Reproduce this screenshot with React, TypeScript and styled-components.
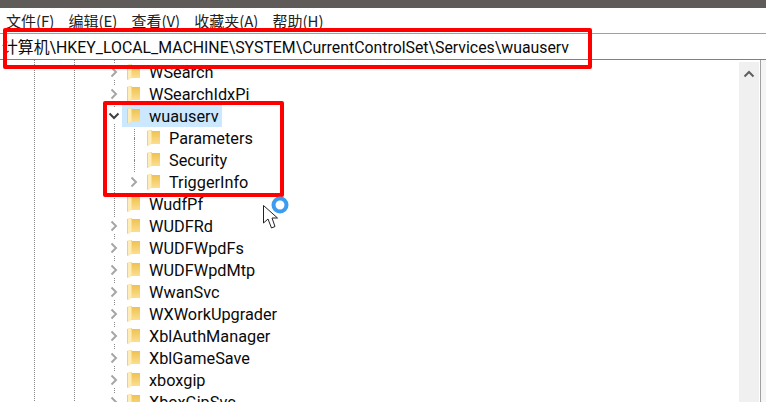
import styled, { createGlobalStyle } from "styled-components";

const GlobalStyle = createGlobalStyle`
  html, body {
    margin: 0;
    padding: 0;
    background: #fff;
    overflow: hidden;
  }
`;

interface TreeItem {
  name: string;
  level?: number;
  toggle?: "closed" | "open" | "none";
  selected?: boolean;
}

const menus = ["文件(F)", "编辑(E)", "查看(V)", "收藏夹(A)", "帮助(H)"];

const items: TreeItem[] = [
  { name: "WSearch", toggle: "closed" },
  { name: "WSearchIdxPi", toggle: "closed" },
  { name: "wuauserv", toggle: "open", selected: true },
  { name: "Parameters", level: 1, toggle: "none" },
  { name: "Security", level: 1, toggle: "none" },
  { name: "TriggerInfo", level: 1, toggle: "closed" },
  { name: "WudfPf", toggle: "none" },
  { name: "WUDFRd", toggle: "closed" },
  { name: "WUDFWpdFs", toggle: "closed" },
  { name: "WUDFWpdMtp", toggle: "closed" },
  { name: "WwanSvc", toggle: "closed" },
  { name: "WXWorkUpgrader", toggle: "closed" },
  { name: "XblAuthManager", toggle: "closed" },
  { name: "XblGameSave", toggle: "closed" },
  { name: "xboxgip", toggle: "closed" },
  { name: "XboxGipSvc", toggle: "closed" },
];

function Folder() {
  return (
    <FolderSvg viewBox="0 0 13 16" width="13" height="16">
      <defs>
        <linearGradient id="pane" x1="0" y1="0" x2="0" y2="1">
          <stop offset="0" stopColor="#efbf4c" />
          <stop offset="1" stopColor="#fde39a" />
        </linearGradient>
      </defs>
      <path d="M0 1 L5 0 L5 1 L13 1 L13 14 L4 14 L1 16 L0 16 Z" fill="url(#pane)" />
      <path d="M0 1 L4.5 0 L4.5 13 L0.5 16 L0 16 Z" fill="#feedb8" />
      <path d="M0.5 1 L0.5 15.5" stroke="#ecd080" strokeWidth="1" />
    </FolderSvg>
  );
}

function Toggle({ state }: { state: TreeItem["toggle"] }) {
  if (state === "none") return <ToggleCell $blank />;
  return (
    <ToggleCell>
      <svg width="12" height="12" viewBox="0 0 12 12" fill="none">
        {state === "open" ? (
          <path d="M1.5 3.5 L6 8 L10.5 3.5" stroke="#404040" strokeWidth="2" />
        ) : (
          <path d="M3.5 1.5 L8 6 L3.5 10.5" stroke="#a6a6a6" strokeWidth="2" />
        )}
      </svg>
    </ToggleCell>
  );
}

export default function App() {
  return (
    <Window>
      <GlobalStyle />
      <TitleStrip />
      <MenuBar>
        {menus.map((m) => (
          <MenuItem key={m}>{m}</MenuItem>
        ))}
      </MenuBar>
      <AddressBar>
        <AddressText>计算机\HKEY_LOCAL_MACHINE\SYSTEM\CurrentControlSet\Services\wuauserv</AddressText>
      </AddressBar>
      <Body>
        <Tree>
          {items.map((item) => (
            <Row key={item.name} $level={item.level ?? 0}>
              <Toggle state={item.toggle} />
              <Entry $selected={item.selected}>
                <Folder />
                <Label>{item.name}</Label>
              </Entry>
            </Row>
          ))}
          <ChildGuide />
        </Tree>
        <Scrollbar>
          <svg width="12" height="8" viewBox="0 0 12 8" fill="none">
            <path d="M1.5 6.5 L6 2 L10.5 6.5" stroke="#606060" strokeWidth="2" />
          </svg>
        </Scrollbar>
        <RightEdge />
      </Body>
      <AddressMark />
      <TreeMark />
      <BusyCursor>
        <svg width="32" height="36" viewBox="0 0 32 36">
          <circle cx="18" cy="9" r="6.5" fill="#fff" stroke="#3b9cf0" strokeWidth="4" />
          <path
            d="M1.5 9.5 L1.5 27 L6 23 L9.5 32 L13 30.5 L10 22 L15.5 22 Z"
            fill="#fff"
            stroke="#222"
            strokeWidth="1"
          />
        </svg>
      </BusyCursor>
    </Window>
  );
}

const Window = styled.div`
  position: relative;
  width: 766px;
  height: 402px;
  overflow: hidden;
  background: #fff;
  color: #0a0a0a;
  font-family: "Roboto", "Noto Sans CJK SC", sans-serif;
  font-size: 16.3px;
`;

const TitleStrip = styled.div`
  height: 8px;
  background: #5f5b58;
`;

const MenuBar = styled.div`
  display: flex;
  height: 25px;
  padding-left: 6px;
  gap: 14px;
  align-items: center;
  font-family: "Noto Sans CJK SC", sans-serif;
  font-size: 15px;
  color: #222;
`;

const MenuItem = styled.span`
  white-space: nowrap;
`;

const AddressBar = styled.div`
  display: flex;
  align-items: center;
  height: 25px;
  border-top: 1px solid #a0a0a0;
  border-bottom: 1px solid #808080;
  overflow: hidden;
`;

const AddressText = styled.span`
  margin-left: 2px;
  white-space: nowrap;
  font-size: 15.85px;
`;

const Body = styled.div`
  display: flex;
  height: 342px;
`;

const Tree = styled.div`
  position: relative;
  flex: 1;
  padding-top: 1px;
  background-image:
    repeating-linear-gradient(to bottom, #888 0 1px, transparent 1px 2px),
    repeating-linear-gradient(to bottom, #888 0 1px, transparent 1px 2px),
    repeating-linear-gradient(to bottom, #888 0 1px, transparent 1px 2px);
  background-size: 1px 100%;
  background-position: 34px 0, 74px 0, 114px 0;
  background-repeat: no-repeat;
`;

const Row = styled.div<{ $level: number }>`
  display: flex;
  align-items: center;
  height: 22px;
  padding-left: ${(p) => 106 + p.$level * 20}px;
`;

const ToggleCell = styled.span<{ $blank?: boolean }>`
  display: flex;
  align-items: center;
  justify-content: center;
  flex: none;
  width: 16px;
  height: ${(p) => (p.$blank ? "1px" : "16px")};
  background: ${(p) =>
    p.$blank
      ? "repeating-linear-gradient(to right, transparent 0 8px, #888 8px 9px, transparent 9px 10px)"
      : "#fff"};
`;

const Entry = styled.span<{ $selected?: boolean }>`
  display: flex;
  align-items: center;
  height: 22px;
  padding: 0 3px 0 5px;
  background: ${(p) => (p.$selected ? "#cce8ff" : "transparent")};
`;

const FolderSvg = styled.svg`
  flex: none;
  margin-right: 9px;
`;

const Label = styled.span`
  padding-top: 2px;
  line-height: 20px;
  white-space: nowrap;
`;

const ChildGuide = styled.div`
  position: absolute;
  left: 134px;
  top: 69px;
  width: 1px;
  height: 43px;
  background: repeating-linear-gradient(to bottom, #888 0 1px, transparent 1px 2px);
`;

const Scrollbar = styled.div`
  display: flex;
  justify-content: center;
  flex: none;
  width: 20px;
  padding-top: 8px;
  margin-top: 2px;
  background: #f0f0f0;
`;

const RightEdge = styled.div`
  flex: none;
  width: 5px;
  margin-left: 1px;
  border-left: 1px solid #a0a0a0;
  background: #f5f5f5;
`;

const AddressMark = styled.div`
  position: absolute;
  left: 3px;
  top: 28px;
  width: 581px;
  height: 33px;
  border: 4px solid #fe0000;
  border-radius: 2px;
`;

const TreeMark = styled.div`
  position: absolute;
  left: 103px;
  top: 101px;
  width: 173px;
  height: 88px;
  border: 4px solid #fe0000;
  border-radius: 2px;
`;

const BusyCursor = styled.div`
  position: absolute;
  left: 262px;
  top: 196px;
  width: 32px;
  height: 36px;
`;
